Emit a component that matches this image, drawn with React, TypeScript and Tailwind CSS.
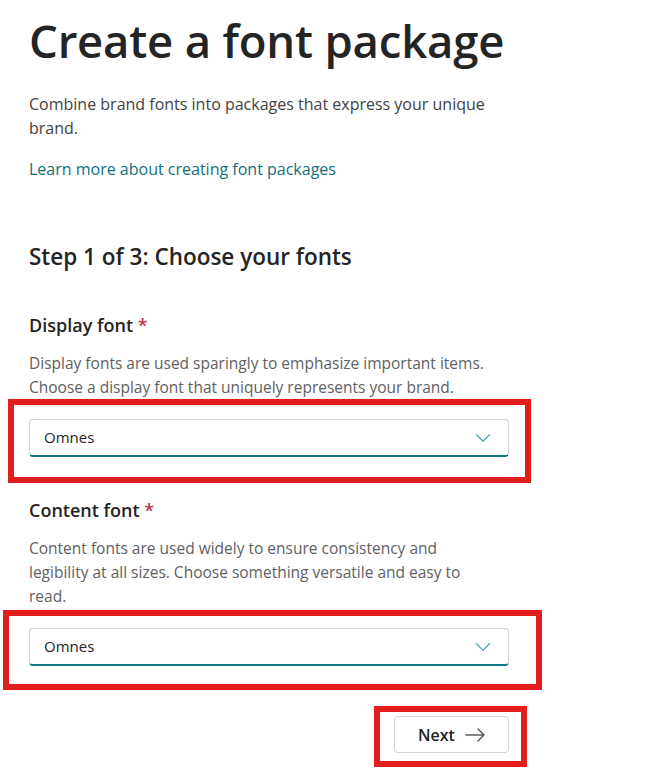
import { ChevronDown } from 'lucide-react';

const FontSelect = ({ value }: { value: string }) => (
  <div className="flex h-[38px] w-[480px] items-center justify-between rounded-[4px] border border-[#d1d1d1] border-b-2 border-b-[#0f7b86] bg-white pl-[14px] pr-[12px]">
    <span className="text-[15px] text-[#242424]">{value}</span>
    <ChevronDown className="h-[26px] w-[26px] text-[#5aa5ad]" strokeWidth={1.2} />
  </div>
);

// long thin arrow used on the Next button
const NextArrow = () => (
  <svg width="20" height="14" viewBox="0 0 20 14" fill="none" stroke="#5c5c5c" strokeWidth="1.5" strokeLinecap="round" strokeLinejoin="round">
    <path d="M1 7h18M13 1l6 6-6 6" />
  </svg>
);

const App = () => {
  return (
    <div className="min-h-screen bg-white font-['Open_Sans',sans-serif] text-[#242424]">
      <div className="w-[480px] pl-[29px] pt-[12px] box-content">
        <h1 className="whitespace-nowrap text-[45.5px] font-semibold leading-[56px] tracking-[-0.2px] text-[#242424]">
          Create a font package
        </h1>
        <p className="mt-[24px] w-[470px] text-[16px] leading-[24px] text-[#424242]">
          Combine brand fonts into packages that express your unique brand.
        </p>
        <a href="#" className="mt-[17px] block text-[16px] leading-[24px] text-[#11707c]">
          Learn more about creating font packages
        </a>

        <h2 className="mt-[62px] text-[22.5px] font-semibold leading-[28px] text-[#242424]">
          Step 1 of 3: Choose your fonts
        </h2>

        <div className="mt-[42px]">
          <div className="text-[18px] font-semibold leading-[24px]">
            Display font <span className="text-[#c4314b]">*</span>
          </div>
          <p className="mt-[14px] whitespace-nowrap text-[15.5px] leading-[24px] text-[#616161]">
            Display fonts are used sparingly to emphasize important items.
            <br />
            Choose a display font that uniquely represents your brand.
          </p>
          <div className="ml-[-21px] w-[523px] border-[6px] border-[#e21d1d] pb-[20px] pl-[15px] pt-[14px]">
            <FontSelect value="Omnes" />
          </div>
        </div>

        <div className="mt-[15px]">
          <div className="text-[18px] font-semibold leading-[24px]">
            Content font <span className="text-[#c4314b]">*</span>
          </div>
          <p className="mt-[14px] whitespace-nowrap text-[15.5px] leading-[24px] text-[#616161]">
            Content fonts are used widely to ensure consistency and
            <br />
            legibility at all sizes. Choose something versatile and easy to
            <br />
            read.
          </p>
          <div className="mt-[2px] ml-[-26px] w-[539px] border-[6px] border-[#e21d1d] pb-[18px] pl-[20px] pt-[12px]">
            <FontSelect value="Omnes" />
          </div>
        </div>

        <div className="mt-[16px] flex justify-end">
          <div className="mr-[-18px] border-[6px] border-[#e21d1d] pb-[8px] pl-[14px] pr-[12px] pt-[4px]">
            <button className="flex h-[37px] w-[115px] items-center justify-center gap-[10px] rounded-[4px] border border-[#d1d1d1] bg-white text-[16px] font-semibold text-[#242424]">
              Next
              <NextArrow />
            </button>
          </div>
        </div>
      </div>
    </div>
  );
};

export default App;
